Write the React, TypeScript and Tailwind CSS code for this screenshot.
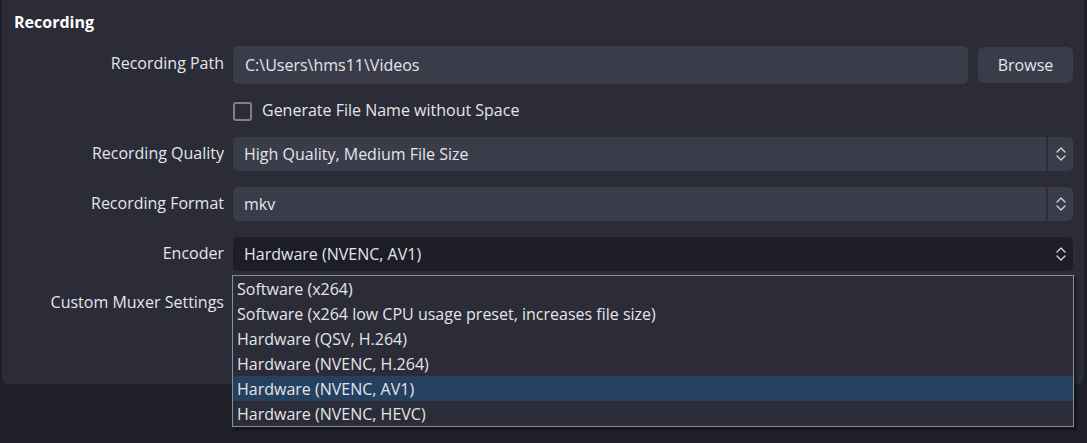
import React from "react";

function Chevrons() {
  return (
    <svg width="12" height="18" viewBox="0 0 12 18" fill="none" stroke="#d6d7dd" strokeWidth="1.3" strokeLinecap="round" strokeLinejoin="round">
      <path d="M2 7 L6 3 L10 7" />
      <path d="M2 11 L6 15 L10 11" />
    </svg>
  );
}

function Combo({ value, focused }: { value: string; focused?: boolean }) {
  return (
    <div
      className={
        "flex h-[34px] w-[840px] items-stretch rounded-[5px] " +
        (focused ? "bg-[#1c1d27]" : "bg-[#3b3c4a]")
      }
    >
      <div className="flex flex-1 items-center pl-[11px]">{value}</div>
      {!focused && <div className="w-[2px] bg-[#2b2c37]" />}
      <div className="flex w-[25px] items-center justify-center">
        <Chevrons />
      </div>
    </div>
  );
}

const items = [
  "Software (x264)",
  "Software (x264 low CPU usage preset, increases file size)",
  "Hardware (QSV, H.264)",
  "Hardware (NVENC, H.264)",
  "Hardware (NVENC, AV1)",
  "Hardware (NVENC, HEVC)",
];

export default function App() {
  return (
    <div className="h-[443px] w-[1087px] overflow-hidden bg-[#1e1f29] font-['Open_Sans',sans-serif] text-[16px] text-[#e4e5ea]">
      <div className="relative ml-[2px] h-[384px] w-[1082px] rounded-b-[6px] bg-[#2b2c37] pl-[12px] pt-[11px]">
        <div className="h-[22px] text-[16px] font-bold leading-[22px] text-white">Recording</div>

        <div className="mt-[13px] flex h-[38px] items-center gap-[9px]">
          <div className="w-[210px] pb-[4px] text-right">Recording Path</div>
          <div className="flex items-center gap-[10px]">
            <div className="flex h-[38px] w-[735px] items-center rounded-[5px] bg-[#3b3c4a] pl-[12px]">
              C:\Users\hms11\Videos
            </div>
            <div className="flex h-[36px] w-[95px] items-center justify-center rounded-[6px] bg-[#3b3c4a]">
              Browse
            </div>
          </div>
        </div>

        <div className="mt-[8px] flex h-[38px] items-center gap-[9px]">
          <div className="w-[210px]" />
          <div className="flex items-center gap-[10px]">
            <div className="h-[19px] w-[19px] rounded-[3px] border-2 border-[#7d7f8a]" />
            <span className="pb-[2px]">Generate File Name without Space</span>
          </div>
        </div>

        <div className="mt-[7px] flex h-[34px] items-center gap-[9px]">
          <div className="w-[210px] pb-[2px] text-right">Recording Quality</div>
          <Combo value="High Quality, Medium File Size" />
        </div>

        <div className="mt-[16px] flex h-[34px] items-center gap-[9px]">
          <div className="w-[210px] pb-[2px] text-right">Recording Format</div>
          <Combo value="mkv" />
        </div>

        <div className="mt-[16px] flex h-[34px] items-center gap-[9px]">
          <div className="w-[210px] pb-[2px] text-right">Encoder</div>
          <Combo value="Hardware (NVENC, AV1)" focused />
        </div>

        <div className="mt-[15px] flex h-[34px] items-center gap-[9px]">
          <div className="w-[210px] pb-[2px] text-right">Custom Muxer Settings</div>
        </div>

        <div className="absolute left-[230px] top-[275px] w-[842px] border border-[#8b8e99] bg-[#2b2c37] shadow-[3px_3px_2px_rgba(0,0,0,0.35)]">
          {items.map((it) => (
            <div
              key={it}
              className={
                "flex h-[25px] items-center pl-[4px] " +
                (it === "Hardware (NVENC, AV1)" ? "bg-[#24415f]" : "")
              }
            >
              {it}
            </div>
          ))}
        </div>
      </div>
    </div>
  );
}
